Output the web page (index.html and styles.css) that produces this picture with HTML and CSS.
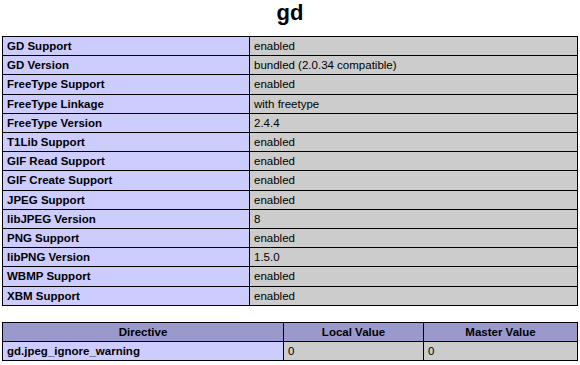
FILE: index.html
```html
<!DOCTYPE html>
<html>
<head>
<meta charset="utf-8">
<link rel="stylesheet" href="styles.css">
</head>
<body>
<div class="page">
  <h2 class="title">gd</h2>
  <table class="info">
    <tr><td class="e">GD Support</td><td class="v">enabled</td></tr>
    <tr><td class="e">GD Version</td><td class="v">bundled (2.0.34 compatible)</td></tr>
    <tr><td class="e">FreeType Support</td><td class="v">enabled</td></tr>
    <tr><td class="e">FreeType Linkage</td><td class="v">with freetype</td></tr>
    <tr><td class="e">FreeType Version</td><td class="v">2.4.4</td></tr>
    <tr><td class="e">T1Lib Support</td><td class="v">enabled</td></tr>
    <tr><td class="e">GIF Read Support</td><td class="v">enabled</td></tr>
    <tr><td class="e">GIF Create Support</td><td class="v">enabled</td></tr>
    <tr><td class="e">JPEG Support</td><td class="v">enabled</td></tr>
    <tr><td class="e">libJPEG Version</td><td class="v">8</td></tr>
    <tr><td class="e">PNG Support</td><td class="v">enabled</td></tr>
    <tr><td class="e">libPNG Version</td><td class="v">1.5.0</td></tr>
    <tr><td class="e">WBMP Support</td><td class="v">enabled</td></tr>
    <tr><td class="e">XBM Support</td><td class="v">enabled</td></tr>
  </table>
  <table class="info directives">
    <tr><th class="h c1">Directive</th><th class="h c2">Local Value</th><th class="h c3">Master Value</th></tr>
    <tr><td class="e">gd.jpeg_ignore_warning</td><td class="v">0</td><td class="v">0</td></tr>
  </table>
</div>
</body>
</html>
```

FILE: styles.css
```css
html, body {
  margin: 0;
  padding: 0;
  background: #fff;
}
body {
  font-family: "Liberation Sans", Arial, Helvetica, sans-serif;
  color: #000;
}
.page {
  padding: 0 2px;
  width: 576px;
}
.title {
  margin: 0 0 10px 0;
  font-size: 22px;
  line-height: 26px;
  font-weight: bold;
  text-align: center;
}
.info {
  width: 576px;
  border-collapse: collapse;
  table-layout: fixed;
}
.info td, .info th {
  border: 1px solid #000;
  font-size: 11.5px;
  line-height: 14.2px;
  padding: 2px 4px 2px 4px;
  vertical-align: baseline;
  text-align: left;
  white-space: nowrap;
}
.info td.e { width: 238px; }
.e {
  background-color: #ccccff;
  font-weight: bold;
}
.v {
  background-color: #cccccc;
}
.h {
  background-color: #9999cc;
  font-weight: bold;
}
.info th.h { text-align: center; }
.directives {
  margin-top: 16px;
}
.directives th.c1 { width: 272px; }
.directives th.c2 { width: 131px; }
.directives td.e { width: auto; }
```
